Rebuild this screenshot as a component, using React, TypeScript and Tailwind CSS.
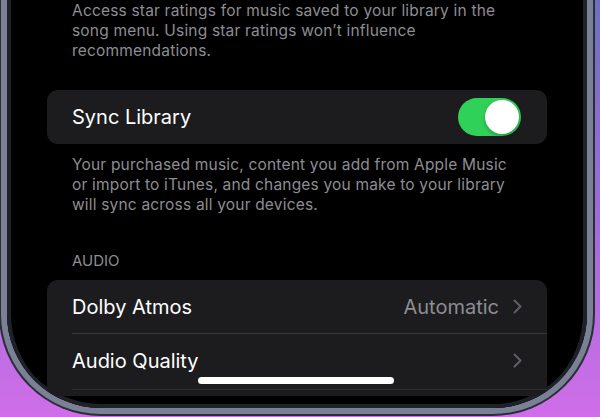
import React from "react";

const Chevron: React.FC = () => (
  <svg width="9" height="15" viewBox="0 0 9 15" fill="none" className="ml-[14px]">
    <path d="M1.5 1.5L7.5 7.5L1.5 13.5" stroke="#5f5f64" strokeWidth="2" strokeLinecap="round" strokeLinejoin="round" />
  </svg>
);

const Toggle: React.FC = () => (
  <div className="w-[63px] h-[38px] rounded-full bg-[#30d158] p-[2px] flex justify-end">
    <div className="w-[34px] h-[34px] rounded-full bg-white shadow-[0_2px_4px_rgba(0,0,0,0.25)]" />
  </div>
);

const Footnote: React.FC<{ children: React.ReactNode }> = ({ children }) => (
  <p className="px-[25px] text-[15.5px] leading-[20px] tracking-[0.012em] text-[#8d8d93]">{children}</p>
);

export default function App() {
  return (
    <div
      className="w-[600px] h-[417px] overflow-hidden bg-gradient-to-b from-[#6a70c6] via-[#a06ad8] to-[#cf6ee8]"
      style={{ fontFamily: "Inter, 'Noto Sans', sans-serif" }}
    >
      <div className="-ml-[1px] w-[596px] h-[416px] rounded-b-[102px] bg-[#7a8194] border-x-2 border-b-2 border-[#2a2e38] px-[6px] pb-[6px]">
        <div className="relative h-full bg-black rounded-b-[94px] overflow-hidden px-[40px] shadow-[inset_4px_0_0_#1f2128,inset_-4px_0_0_#1f2128,inset_0_-4px_0_#1f2128]">
          <div className="pt-[1px]">
            <Footnote>
              Access star ratings for music saved to your library in the song menu. Using star ratings won’t influence
              recommendations.
            </Footnote>
          </div>

          <div className="mt-[29px] h-[54px] rounded-[11px] bg-[#1c1c1e] flex items-center justify-between pl-[25px] pr-[26px]">
            <span className="text-[20px] text-white">Sync Library</span>
            <Toggle />
          </div>

          <div className="mt-[11px]">
            <Footnote>
              Your purchased music, content you add from Apple Music or import to iTunes, and changes you make to your
              library will sync across all your devices.
            </Footnote>
          </div>

          <div className="mt-[36px] px-[25px] text-[15px] leading-[20px] text-[#8d8d93]">AUDIO</div>

          <div className="mt-[9px] rounded-[11px] bg-[#1c1c1e] pl-[25px]">
            <div className="h-[54px] flex items-center justify-between pr-[25px] border-b border-[#38383a]">
              <span className="text-[20px] text-white">Dolby Atmos</span>
              <div className="flex items-center">
                <span className="text-[20px] text-[#8d8d93]">Automatic</span>
                <Chevron />
              </div>
            </div>
            <div className="h-[56px] pb-[2px] flex items-center justify-between pr-[25px] border-b border-[#2c2c2e]">
              <span className="text-[20px] text-white">Audio Quality</span>
              <Chevron />
            </div>
            <div className="h-[6px]" />
          </div>

          <div className="absolute left-[191px] top-[377px] w-[196px] h-[7px] rounded-full bg-white" />
        </div>
      </div>
    </div>
  );
}
